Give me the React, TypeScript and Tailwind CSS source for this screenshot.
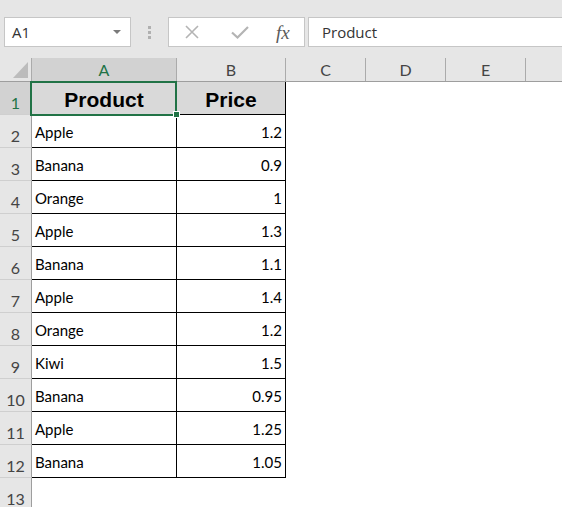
import React from 'react'

const rows: [string, string][] = [
  ['Apple', '1.2'],
  ['Banana', '0.9'],
  ['Orange', '1'],
  ['Apple', '1.3'],
  ['Banana', '1.1'],
  ['Apple', '1.4'],
  ['Orange', '1.2'],
  ['Kiwi', '1.5'],
  ['Banana', '0.95'],
  ['Apple', '1.25'],
  ['Banana', '1.05'],
]

function RowHead({ n, active }: { n: number; active?: boolean }) {
  return (
    <div
      className={`flex h-full w-[32px] shrink-0 items-end justify-center border-r border-b border-r-[#9e9e9e] border-b-[#cfcfcf] pb-[1px] text-[16px] leading-[20px] ${
        active ? 'bg-[#d2d2d2] text-[#217346]' : 'bg-[#e6e6e6] text-[#444444]'
      }`}
    >
      {n}
    </div>
  )
}

function ColHead({ label, w, active }: { label: string; w: string; active?: boolean }) {
  return (
    <div
      className={`flex h-full shrink-0 items-end justify-center border-r border-[#ababab] pb-[1px] text-[16px] leading-[20px] ${w} ${
        active ? 'bg-[#d2d2d2] text-[#217346]' : 'text-[#444444]'
      }`}
    >
      {label}
    </div>
  )
}

export default function App() {
  return (
    <div className="relative h-[507px] w-[562px] overflow-hidden bg-white font-['Lato',sans-serif]">
      {/* formula bar */}
      <div className="flex h-[58px] items-start bg-[#e6e6e6] pt-[17px] pl-[4px] font-['Open_Sans',sans-serif]">
        <div className="flex h-[30px] w-[127px] shrink-0 items-center justify-between border border-[#c6c6c6] bg-white pr-[9px] pl-[7px] text-[15px] text-[#333333]">
          <span>A1</span>
          <svg width="8" height="4" viewBox="0 0 8 4">
            <path d="M0 0 L8 0 L4 4 Z" fill="#7a7a7a" />
          </svg>
        </div>
        <div className="ml-[17px] flex h-[30px] w-[3px] shrink-0 flex-col items-center justify-center gap-[2px]">
          <div className="h-[3px] w-[3px] bg-[#b0b0b0]" />
          <div className="h-[3px] w-[3px] bg-[#b0b0b0]" />
          <div className="h-[3px] w-[3px] bg-[#b0b0b0]" />
        </div>
        <div className="ml-[17px] flex h-[30px] w-[137px] shrink-0 items-center border border-[#c6c6c6] bg-white">
          <svg className="ml-[16px]" width="14" height="14" viewBox="0 0 14 14">
            <path d="M1 1 L13 13 M13 1 L1 13" stroke="#b4b4b4" strokeWidth="1.6" />
          </svg>
          <svg className="ml-[32px]" width="18" height="13" viewBox="0 0 18 13">
            <path d="M1 6.5 L6.5 11.5 L17 1" stroke="#b4b4b4" strokeWidth="2.2" fill="none" />
          </svg>
          <span className="ml-[27px] font-['Liberation_Serif',serif] text-[19px] leading-none text-[#5a5a5a] italic">
            fx
          </span>
        </div>
        <div className="ml-[3px] flex h-[30px] flex-1 items-center border-y border-l border-[#c6c6c6] bg-white pl-[13px] text-[15px] text-[#333333]">
          Product
        </div>
      </div>

      {/* column headers */}
      <div className="flex h-[24px] border-b border-[#9e9e9e] bg-[#e6e6e6]">
        <div className="flex h-full w-[32px] shrink-0 items-end justify-end border-r border-[#ababab] pr-[3px] pb-[3px]">
          <svg width="15" height="16" viewBox="0 0 15 16">
            <path d="M15 0 L15 16 L0 16 Z" fill="#bcbcbc" />
          </svg>
        </div>
        <ColHead label="A" w="w-[145px]" active />
        <ColHead label="B" w="w-[109px]" />
        <ColHead label="C" w="w-[80px]" />
        <ColHead label="D" w="w-[80px]" />
        <ColHead label="E" w="w-[80px]" />
        <div className="flex-1" />
      </div>

      {/* row 1 */}
      <div className="flex h-[33px]">
        <RowHead n={1} active />
        <div className="relative flex w-[145px] shrink-0 items-end justify-center border-r border-b border-black bg-[#d9d9d9] pb-[2px] font-['Liberation_Sans',sans-serif] text-[21px] leading-[24px] font-bold text-black">
          Product
          <div className="absolute -top-px -left-[2px] h-[35px] w-[147px] border-2 border-[#217346]" />
          <div className="absolute -right-[4px] -bottom-[4px] h-[7px] w-[7px] border border-white bg-[#217346]" />
        </div>
        <div className="flex w-[109px] shrink-0 items-end justify-center border-r border-b border-black bg-[#d9d9d9] pb-[2px] font-['Liberation_Sans',sans-serif] text-[21px] leading-[24px] font-bold text-black">
          Price
        </div>
      </div>

      {rows.map(([name, price], i) => (
        <div key={i} className="flex h-[33px]">
          <RowHead n={i + 2} />
          <div className="flex w-[145px] shrink-0 items-end border-r border-b border-black pb-[5px] pl-[3px] text-[15px] leading-[20px] text-black">
            {name}
          </div>
          <div className="flex w-[109px] shrink-0 items-end justify-end border-r border-b border-black pr-[3px] pb-[5px] text-[15px] leading-[20px] text-black">
            {price}
          </div>
        </div>
      ))}

      <div className="flex h-[33px]">
        <RowHead n={13} />
      </div>
    </div>
  )
}
